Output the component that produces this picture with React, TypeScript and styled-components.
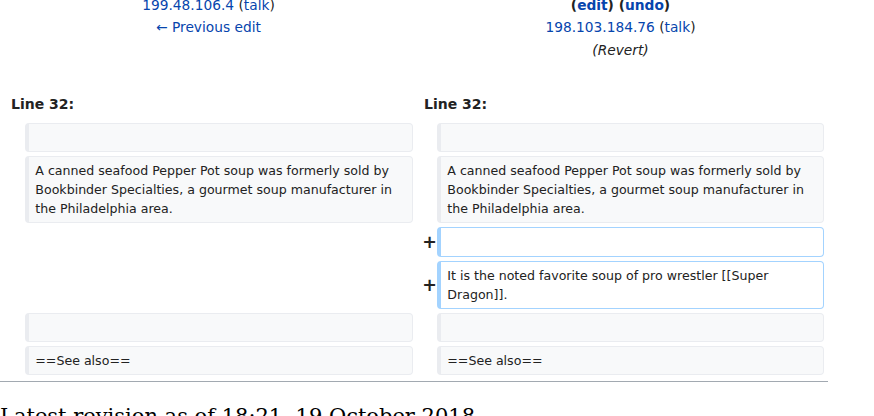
import React from 'react';
import styled, { createGlobalStyle } from 'styled-components';

const GlobalStyle = createGlobalStyle`
  html, body { margin: 0; padding: 0; background: #fff; overflow: hidden; }
  body {
    font-family: 'DejaVu Sans', sans-serif;
    color: #222;
    font-size: 14px;
    line-height: 1.6;
  }
`;

const Page = styled.div`
  width: 828px;
  margin-top: -6px;
`;

const Diff = styled.div`
  display: grid;
  grid-template-columns: 17px 388px 16px 387px;
  column-gap: 4px;
  row-gap: 4px;
  padding: 0 4px;
`;

const Title = styled.div<{ $side: 'left' | 'right' }>`
  grid-column: ${(p) => (p.$side === 'left' ? '1 / span 2' : '3 / span 2')};
  text-align: center;
  font-size: 13.75px;
  line-height: 22.4px;
`;

const TitleLine = styled.div<{ $italic?: boolean; $bold?: boolean }>`
  font-style: ${(p) => (p.$italic ? 'italic' : 'normal')};
  font-weight: ${(p) => (p.$bold ? 'bold' : 'normal')};
  min-height: 22.4px;
`;

const Link = styled.a`
  color: #0645ad;
  text-decoration: none;
`;

const LineNo = styled.div<{ $side: 'left' | 'right' }>`
  grid-column: ${(p) => (p.$side === 'left' ? '1 / span 2' : '3 / span 2')};
  font-weight: bold;
  padding: 5px 7px 4.24px;
  line-height: 22.4px;
`;

const Marker = styled.div`
  display: flex;
  align-items: center;
  justify-content: flex-end;
  font-size: 17.5px;
  font-weight: bold;
  line-height: 21px;
  padding: 4.5px 0;
  margin-right: -4px;
  color: #222;
`;

const EmptySide = styled.div`
  grid-column: 1 / span 2;
`;

const Cell = styled.div<{ $kind: 'context' | 'added' }>`
  box-sizing: border-box;
  min-height: 29px;
  font-size: 12.6px;
  line-height: 19px;
  padding: 4px 6.3px;
  border: 1px solid ${(p) => (p.$kind === 'added' ? '#a3d3ff' : '#eaecf0')};
  border-left-width: 4px;
  border-radius: 4px;
  background: ${(p) => (p.$kind === 'added' ? '#ffffff' : '#f8f9fa')};
  color: #222;
  white-space: pre-wrap;
  overflow-wrap: break-word;
`;

const Rule = styled.div`
  height: 1px;
  background: #a2a9b1;
  margin-top: 6px;
`;

const Heading = styled.h2`
  font-family: 'DejaVu Serif', serif;
  font-weight: normal;
  font-size: 21px;
  line-height: 1.3;
  margin: 21px 0 0;
  color: #000;
`;

const seafood =
  'A canned seafood Pepper Pot soup was formerly sold by Bookbinder Specialties, a gourmet soup manufacturer in the Philadelphia area.';

function ContextRow({ text }: { text: string }) {
  return (
    <>
      <Marker />
      <Cell $kind="context">{text}</Cell>
      <Marker />
      <Cell $kind="context">{text}</Cell>
    </>
  );
}

function AddedRow({ text }: { text: string }) {
  return (
    <>
      <EmptySide />
      <Marker>+</Marker>
      <Cell $kind="added">{text}</Cell>
    </>
  );
}

export default function App() {
  return (
    <>
      <GlobalStyle />
      <Page>
        <Diff>
          <Title $side="left">
            <TitleLine>
              <Link href="#">199.48.106.4</Link> (<Link href="#">talk</Link>)
            </TitleLine>
            <TitleLine>
              <Link href="#">← Previous edit</Link>
            </TitleLine>
          </Title>
          <Title $side="right">
            <TitleLine $bold>
              (<Link href="#">edit</Link>) (<Link href="#">undo</Link>)
            </TitleLine>
            <TitleLine>
              <Link href="#">198.103.184.76</Link> (<Link href="#">talk</Link>)
            </TitleLine>
            <TitleLine $italic>(Revert)</TitleLine>
            <TitleLine> </TitleLine>
          </Title>
          <LineNo $side="left">Line 32:</LineNo>
          <LineNo $side="right">Line 32:</LineNo>
          <ContextRow text="" />
          <ContextRow text={seafood} />
          <AddedRow text="" />
          <AddedRow text="It is the noted favorite soup of pro wrestler [[Super Dragon]]." />
          <ContextRow text="" />
          <ContextRow text="==See also==" />
        </Diff>
        <Rule />
        <Heading>Latest revision as of 18:21, 19 October 2018</Heading>
      </Page>
    </>
  );
}
